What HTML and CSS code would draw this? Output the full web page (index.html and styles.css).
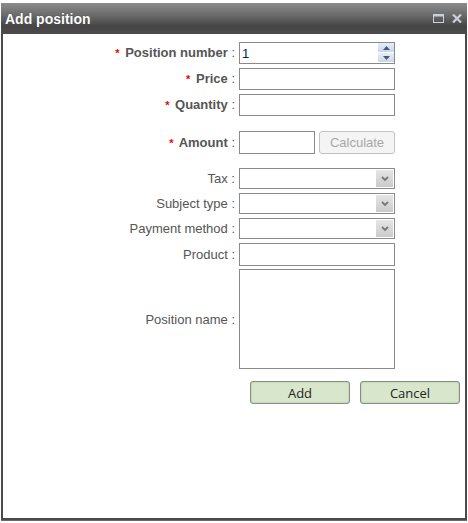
FILE: index.html
```html
<!DOCTYPE html>
<html>
<head>
<meta charset="utf-8">
<link rel="stylesheet" href="styles.css">
</head>
<body>
<div class="dialog">
  <div class="titlebar">
    <span class="title">Add position</span>
    <span class="tools">
      <svg width="11" height="9" viewBox="0 0 11 9"><rect x="0.5" y="0.5" width="10" height="8" fill="none" stroke="#c9d0da" stroke-width="1"/><rect x="0.5" y="0.5" width="10" height="2" fill="#c9d0da"/></svg>
      <svg width="10" height="9" viewBox="0 0 10 9"><path d="M1 0.5 L9 8.5 M9 0.5 L1 8.5" stroke="#c9d0da" stroke-width="2.2"/></svg>
    </span>
  </div>
  <div class="content">
    <div class="form">
      <div class="row">
        <label class="lbl req"><span class="star">*</span> Position number <span class="colon">:</span></label>
        <div class="spin">
          <input class="field spin-input" type="text" value="1">
          <div class="spin-btns">
            <div class="sbtn"><svg width="7" height="4" viewBox="0 0 7 4"><path d="M0 4 L3.5 0 L7 4Z" fill="#4a5a70"/></svg></div>
            <div class="sbtn"><svg width="7" height="4" viewBox="0 0 7 4"><path d="M0 0 L3.5 4 L7 0Z" fill="#4a5a70"/></svg></div>
          </div>
        </div>
      </div>
      <div class="row">
        <label class="lbl req"><span class="star">*</span> Price <span class="colon">:</span></label>
        <input class="field" type="text">
      </div>
      <div class="row">
        <label class="lbl req"><span class="star">*</span> Quantity <span class="colon">:</span></label>
        <input class="field" type="text">
      </div>
      <div class="row row-amount">
        <label class="lbl req"><span class="star">*</span> Amount <span class="colon">:</span></label>
        <div class="amount">
          <input class="field short" type="text">
          <button class="calc" disabled>Calculate</button>
        </div>
      </div>
      <div class="row row-tax">
        <label class="lbl">Tax :</label>
        <div class="select"><div class="arrow"><svg width="8" height="6" viewBox="0 0 8 6"><path d="M1 1 L4 4 L7 1" fill="none" stroke="#777" stroke-width="1.8"/></svg></div></div>
      </div>
      <div class="row">
        <label class="lbl">Subject type :</label>
        <div class="select"><div class="arrow"><svg width="8" height="6" viewBox="0 0 8 6"><path d="M1 1 L4 4 L7 1" fill="none" stroke="#777" stroke-width="1.8"/></svg></div></div>
      </div>
      <div class="row">
        <label class="lbl">Payment method :</label>
        <div class="select"><div class="arrow"><svg width="8" height="6" viewBox="0 0 8 6"><path d="M1 1 L4 4 L7 1" fill="none" stroke="#777" stroke-width="1.8"/></svg></div></div>
      </div>
      <div class="row">
        <label class="lbl">Product :</label>
        <input class="field prod" type="text">
      </div>
      <div class="row row-area">
        <label class="lbl">Position name :</label>
        <textarea class="area"></textarea>
      </div>
      <div class="actions">
        <button class="btn">Add</button>
        <button class="btn">Cancel</button>
      </div>
    </div>
  </div>
</div>
</body>
</html>
```
FILE: styles.css
```css
* { box-sizing: border-box; }
html, body { margin: 0; padding: 0; background: #fff; }
body { width: 468px; height: 523px; overflow: hidden; padding: 3px 1px 0 1px; font-family: "Liberation Sans", Arial, sans-serif; }
.dialog { width: 466px; height: 518px; display: flex; flex-direction: column; border: 1px solid #6a6a6a; border-top: none; }
.titlebar {
  height: 31px; flex: none;
  background: linear-gradient(#8c8c8c 0%, #6a6a6a 40%, #454545 75%, #4c4c4c 100%);
  display: flex; align-items: center; justify-content: space-between;
  padding: 0 5px 0 4px; margin: 0 -1px;
}
.title { color: #fff; font-weight: bold; font-size: 14px; text-shadow: 0 0 1px #333; }
.tools { display: flex; gap: 8px; align-items: center; }
.content { flex: 1; background: #fff; border-left: 2px solid #4a4a4a; border-right: 2px solid #4a4a4a; border-bottom: 2px solid #4a4a4a; margin: 0 -1px; }
.form { padding-top: 8px; display: flex; flex-direction: column; gap: 4px; }
.row { display: grid; grid-template-columns: 232px 156px; column-gap: 4px; align-items: center; }
.row-amount { margin-top: 11px; }
.row-tax { margin-top: 10px; }
.row-area { margin-top: -1px; }
.lbl { text-align: right; font-size: 13px; line-height: 15px; color: #555; white-space: nowrap; }
.req { font-weight: bold; color: #555; }
.colon { font-weight: normal; }
.star { color: #e00; font-size: 11px; margin-right: 2px; }
.field { height: 22px; width: 156px; border: 1px solid #8a8a8a; margin: 0; padding: 0 2px; font: 12px "Liberation Sans", Arial, sans-serif; background: #fff; }
.spin { position: relative; width: 156px; height: 22px; }
.spin-input { color: #001a66; font-size: 13px; padding-left: 2px; }
.spin-btns { position: absolute; right: 1px; top: 1px; display: flex; flex-direction: column; gap: 1px; }
.sbtn { width: 16px; height: 9px; background: linear-gradient(#e8eef8, #c9d6ea); display: flex; align-items: center; justify-content: center; }
.amount { display: flex; gap: 4px; align-items: center; }
.short { width: 76px; height: 23px; }
.calc { width: 76px; height: 23px; border: 1px solid #c2c2c2; border-radius: 3px; background: #f4f4f4; color: #a8a8a8; font: 13px "Liberation Sans", Arial, sans-serif; padding: 0; }
.select { width: 156px; height: 21px; border: 1px solid #8a8a8a; background: #fff; display: flex; justify-content: flex-end; padding: 1px; }
.arrow { width: 17px; height: 100%; background: linear-gradient(#e6e6e6, #cacaca); display: flex; align-items: center; justify-content: center; }
.prod { height: 23px; }
.area { width: 156px; height: 100px; border: 1px solid #8a8a8a; resize: none; margin: 0; padding: 0; display: block; }
.actions { display: flex; gap: 10px; padding-left: 247px; margin-top: 8px; }
.btn { width: 100px; height: 23px; border: 1px solid #8a8a8a; border-radius: 3px; background: #d8e7cc; box-shadow: inset 0 0 2px #9bc37a; font: 13px "Open Sans", "Liberation Sans", sans-serif; color: #222; padding: 0; }
```
